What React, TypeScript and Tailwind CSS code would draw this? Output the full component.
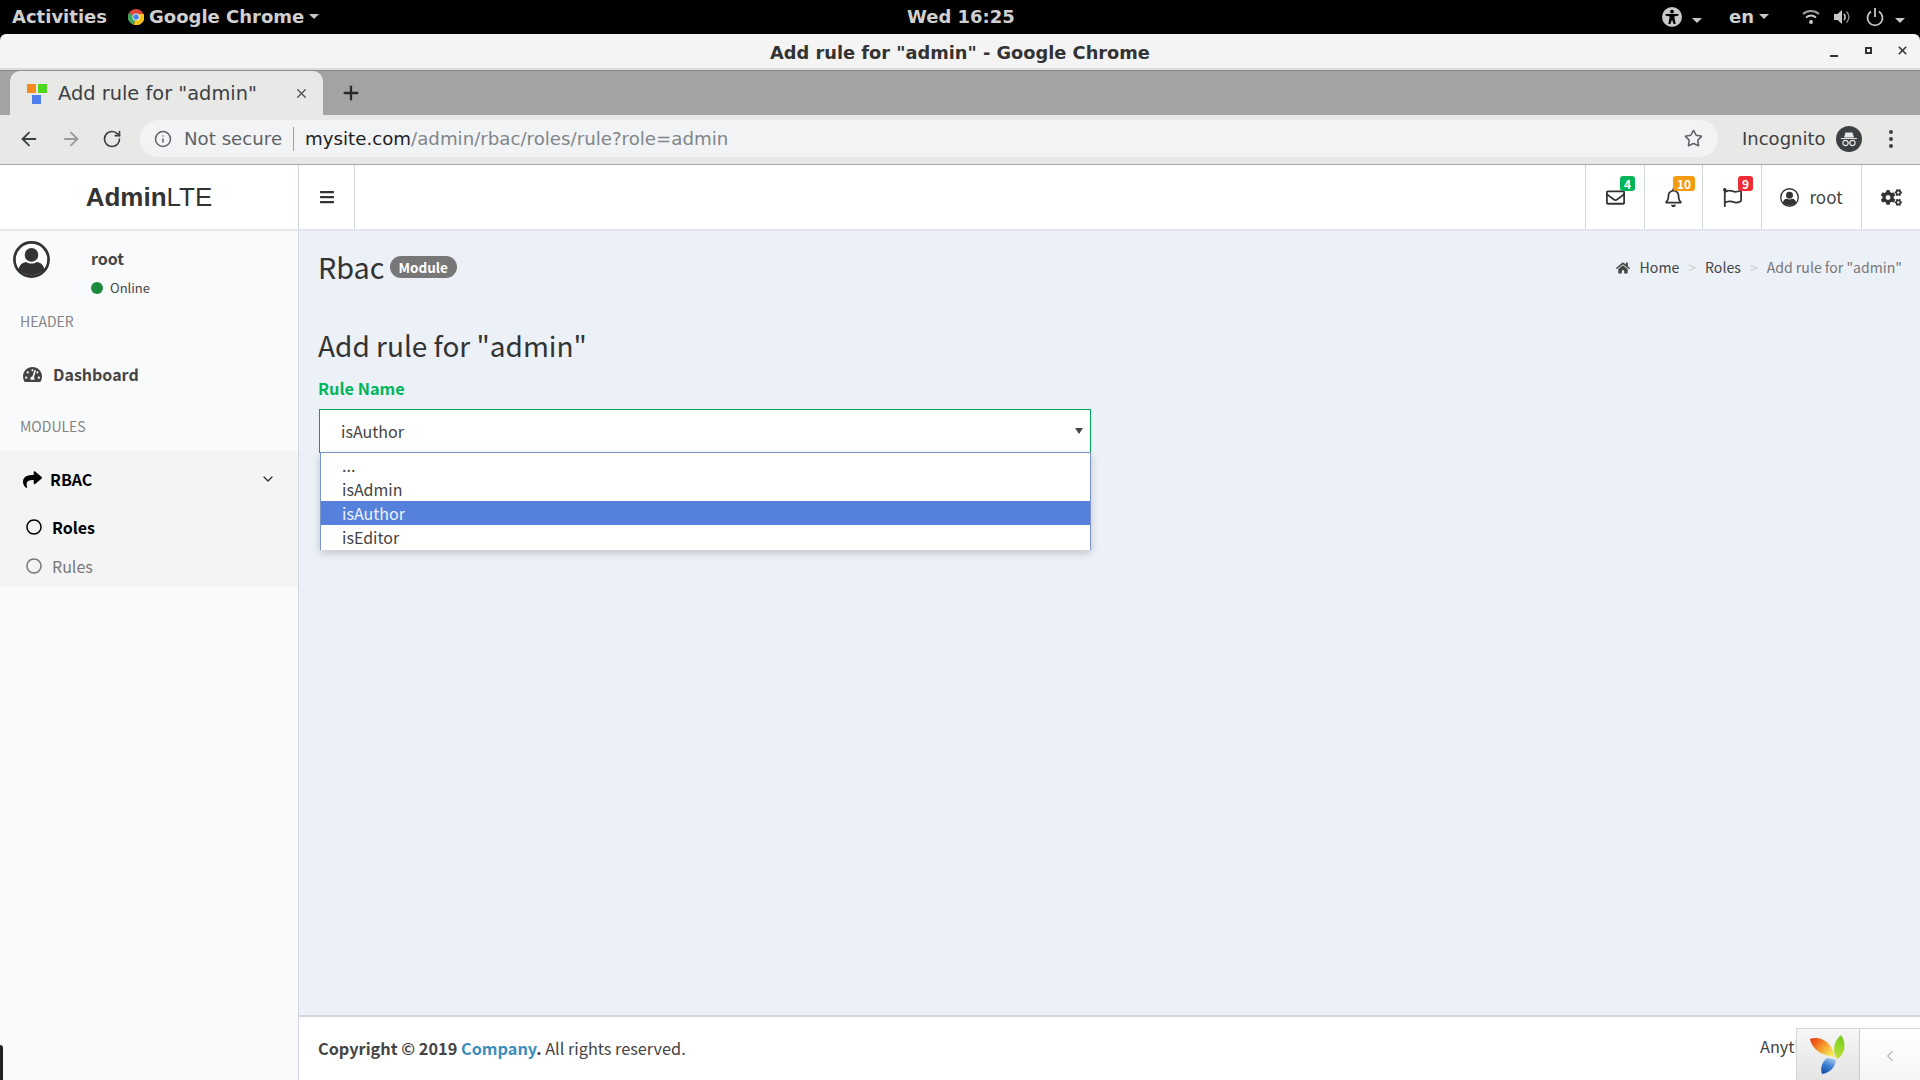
import React from 'react';
import { ArrowLeft, ArrowRight, RotateCw, Info, Star, Plus, X, ChevronDown, ChevronLeft } from 'lucide-react';
import {
  FaBars,
  FaCogs,
  FaHome,
  FaRegBell,
  FaRegCircle,
  FaRegEnvelope,
  FaRegFlag,
  FaShare,
  FaTachometerAlt,
} from 'react-icons/fa';

const PAGE_FONT = "font-['Noto_Sans_CJK_SC','Noto_Sans',sans-serif]";

const Caret = () => (
  <span className="inline-block h-0 w-0 border-x-[5px] border-t-[5px] border-x-transparent border-t-[#c8c8c8]" />
);

const ChromeLogo = () => (
  <svg width="16" height="16" viewBox="0 0 16 16">
    <circle cx="8" cy="8" r="8" fill="#d9463a" />
    <path d="M8 8 L1 4 A8 8 0 0 0 6 15.8 Z" fill="#3aa757" />
    <path d="M8 8 L6 15.8 A8 8 0 0 0 15.8 5 L8 5 Z" fill="#f5c518" />
    <circle cx="8" cy="8" r="3.6" fill="#fff" />
    <circle cx="8" cy="8" r="2.8" fill="#4a80e8" />
  </svg>
);

const AccessIcon = () => (
  <svg width="20" height="20" viewBox="0 0 20 20">
    <circle cx="10" cy="10" r="10" fill="#c8c8c8" />
    <circle cx="10" cy="4.6" r="1.9" fill="#000" />
    <path d="M3.5 7 L16.5 7 L16.5 8.6 L12.3 9.6 L13.6 17 L11.6 17 L10 12.5 L8.4 17 L6.4 17 L7.7 9.6 L3.5 8.6 Z" fill="#000" />
  </svg>
);

const WifiIcon = () => (
  <svg width="18" height="18" viewBox="0 0 18 18" fill="none" stroke="#c8c8c8">
    <path d="M1 6 C5.5 2 12.5 2 17 6" strokeWidth="2" opacity="0.8" />
    <path d="M4 9.5 C7 7 11 7 14 9.5" strokeWidth="2" />
    <circle cx="9" cy="14" r="2" fill="#c8c8c8" stroke="none" />
  </svg>
);

const VolumeIcon = () => (
  <svg width="18" height="18" viewBox="0 0 18 18" fill="none" stroke="#c8c8c8">
    <path d="M1 6 H4.5 L9 2 V16 L4.5 12 H1 Z" fill="#c8c8c8" stroke="none" />
    <path d="M11 6 C12.5 8 12.5 10 11 12" strokeWidth="1.6" />
    <path d="M13.5 3.5 C16.5 7 16.5 11 13.5 14.5" strokeWidth="1.4" opacity="0.7" />
  </svg>
);

const PowerIcon = () => (
  <svg width="18" height="20" viewBox="0 0 18 20" fill="none" stroke="#c8c8c8" strokeWidth="1.8">
    <path d="M9 1 V10" />
    <path d="M5 4.5 A7.5 7.5 0 1 0 13 4.5" />
  </svg>
);

const Favicon = () => (
  <span className="grid h-[20px] w-[20px] grid-cols-2 gap-[2px]">
    <span className="h-[9px] w-[9px] bg-[#f58a1f]" />
    <span className="h-[9px] w-[9px] bg-[#4fd61f]" />
    <span className="col-start-1 ml-[5px] h-[9px] w-[9px] bg-[#4d80ee]" />
  </span>
);

const IncognitoIcon = () => (
  <svg width="26" height="26" viewBox="0 0 26 26">
    <circle cx="13" cy="13" r="13" fill="#3c4043" />
    <path d="M5 12 H21 V13 H5 Z M8 11.5 L9.5 6.5 H16.5 L18 11.5 Z" fill="#e8e8e6" />
    <circle cx="9.5" cy="17" r="2.6" fill="none" stroke="#e8e8e6" strokeWidth="1.1" />
    <circle cx="16.5" cy="17" r="2.6" fill="none" stroke="#e8e8e6" strokeWidth="1.1" />
    <path d="M12 17 H14" stroke="#e8e8e6" strokeWidth="1.1" />
  </svg>
);

// ring, white gap, then head and shoulders clipped to the circle
const UserRing = ({ size }: { size: number }) => (
  <svg width={size} height={size} viewBox="0 0 36 36">
    <circle cx="18" cy="18" r="16.6" fill="#fff" stroke="#333" strokeWidth="2.6" />
    <circle cx="18" cy="13.5" r="6.6" fill="#333" />
    <path d="M5.5 28 C6 23 9.5 21 13 20.5 C16 22.5 20 22.5 23 20.5 C26.5 21 30 23 30.5 28 C24 35 12 35 5.5 28 Z" fill="#333" />
  </svg>
);

const YiiLogo = () => (
  <svg width="38" height="40" viewBox="0 0 38 40">
    <defs>
      <linearGradient id="yiiRed" x1="0" y1="0" x2="1" y2="0.7">
        <stop offset="0" stopColor="#e8300e" />
        <stop offset="0.55" stopColor="#f79a2b" />
        <stop offset="1" stopColor="#f5ea60" />
      </linearGradient>
      <linearGradient id="yiiGreen" x1="0.6" y1="0" x2="0.4" y2="1">
        <stop offset="0" stopColor="#6fcc1d" />
        <stop offset="1" stopColor="#c4e03a" />
      </linearGradient>
      <linearGradient id="yiiBlue" x1="0.7" y1="0" x2="0.3" y2="1">
        <stop offset="0" stopColor="#a8c8e8" />
        <stop offset="0.5" stopColor="#3b7fd0" />
        <stop offset="1" stopColor="#1450a8" />
      </linearGradient>
    </defs>
    <path d="M1 4 C10 1 22 5 26 22 C18 21 4 18 1 4 Z" fill="url(#yiiRed)" />
    <path d="M32 0 C38 8 36 20 28 24 C22 14 26 5 32 0 Z" fill="url(#yiiGreen)" />
    <path d="M18 23 C21 23 25 24 27 25 C26 33 20 38 13 39 C11 33 13 27 18 23 Z" fill="url(#yiiBlue)" />
  </svg>
);

const notifications = [
  { key: 'mail', w: 'w-[59px]', Icon: FaRegEnvelope, badge: '4', color: 'bg-[#00b55a]', badgeLeft: 'left-[34px]' },
  { key: 'bell', w: 'w-[58px]', Icon: FaRegBell, badge: '10', color: 'bg-[#f39c12]', badgeLeft: 'left-[28px]' },
  { key: 'flag', w: 'w-[59px]', Icon: FaRegFlag, badge: '9', color: 'bg-[#ee2c35]', badgeLeft: 'left-[35px]' },
];

function DesktopBar() {
  return (
    <div className="relative flex h-[34px] shrink-0 items-center justify-between bg-black pb-[1px] pl-[12px] pr-[15px] font-['DejaVu_Sans',sans-serif] text-[18px] font-bold text-[#d0d0d0]">
      <div className="flex items-center">
        <span className="w-[116px]">Activities</span>
        <ChromeLogo />
        <span className="ml-[5px] mr-[5px]">Google Chrome</span>
        <Caret />
      </div>
      <span className="absolute left-[907px] top-[3px]">Wed 16:25</span>
      <div className="flex items-center">
        <AccessIcon />
        <span className="ml-[10px] mr-[27px]"><Caret /></span>
        <span className="mr-[5px]">en</span>
        <Caret />
        <span className="ml-[33px]"><WifiIcon /></span>
        <span className="ml-[13px]"><VolumeIcon /></span>
        <span className="ml-[15px]"><PowerIcon /></span>
        <span className="ml-[11px]"><Caret /></span>
      </div>
    </div>
  );
}

function ChromeFrame() {
  return (
    <div className="shrink-0 bg-black font-['DejaVu_Sans',sans-serif]">
      <div className="relative flex h-[36px] items-center justify-center rounded-t-[6px] border-b-2 border-[#dcdcdc] bg-[#f4f4f4] pt-[4px] text-[17.8px] font-bold text-[#333]">
        Add rule for "admin" - Google Chrome
        <span className="absolute left-[1830px] top-[21px] h-[2px] w-[8px] bg-[#333]" />
        <span className="absolute left-[1865px] top-[13px] h-[7px] w-[7px] border-2 border-[#333]" />
        <X className="absolute left-[1896px] top-[10px] h-[13px] w-[13px] text-[#333]" strokeWidth={3} />
      </div>
      <div className="flex h-[45px] items-end border-y border-[#8a8a88] border-b-0 bg-[#a3a3a1] pl-[10px]">
        <div className="flex h-[44px] w-[313px] items-center rounded-t-[10px] bg-[#e8e8e6] pl-[17px] pr-[14px] pt-[1px] text-[19.4px] text-[#3c4043]">
          <Favicon />
          <span className="ml-[11px] flex-1">Add rule for "admin"</span>
          <X className="h-[15px] w-[15px] text-[#4a4a4a]" strokeWidth={2} />
        </div>
        <Plus className="mb-[11px] ml-[17px] h-[22px] w-[22px] text-[#2a2a2a]" strokeWidth={2.5} />
      </div>
      <div className="flex h-[50px] items-center border-y border-[#e8e8e6] border-b-[#a8a8a8] bg-[#e8e8e6] pb-[3px] pl-[18px] pr-[18px]">
        <ArrowLeft className="h-[22px] w-[22px] text-[#3c4043]" strokeWidth={2} />
        <ArrowRight className="ml-[20px] h-[22px] w-[22px] text-[#9a9a9a]" strokeWidth={2} />
        <RotateCw className="ml-[20px] h-[20px] w-[20px] text-[#3c4043]" strokeWidth={2} />
        <div className="ml-[18px] flex h-[37px] w-[1578px] items-center rounded-full bg-[#f1f3f4] pl-[14px] pr-[14px] text-[18.2px]">
          <Info className="h-[18px] w-[18px] text-[#5f6368]" strokeWidth={2} />
          <span className="ml-[12px] text-[#5f6368]">Not secure</span>
          <span className="ml-[11px] mr-[11px] h-[24px] w-px bg-[#9aa0a6]" />
          <span className="text-[#202124]">mysite.com</span>
          <span className="flex-1 text-[#80868b]">/admin/rbac/roles/rule?role=admin</span>
          <Star className="mr-[1px] h-[19px] w-[19px] text-[#5f6368]" strokeWidth={2} />
        </div>
        <span className="ml-[24px] text-[18px] text-[#3c4043]">Incognito</span>
        <span className="ml-[10px]"><IncognitoIcon /></span>
        <span className="ml-[27px] flex flex-col gap-[3px]">
          <span className="h-[4px] w-[4px] rounded-full bg-[#3c4043]" />
          <span className="h-[4px] w-[4px] rounded-full bg-[#3c4043]" />
          <span className="h-[4px] w-[4px] rounded-full bg-[#3c4043]" />
        </span>
      </div>
    </div>
  );
}

function TopNav() {
  return (
    <div className="flex h-[66px] shrink-0 border-b-2 border-[#e4e6ee] bg-white text-[#333]">
      <div className="flex w-[299px] items-center justify-center border-r border-[#d2d6de] text-[26px] text-[#333] font-['Liberation_Sans',sans-serif]">
        <b className="font-bold">Admin</b>LTE
      </div>
      <div className="flex w-[56px] items-center justify-center border-r border-[#d2d6de]">
        <FaBars className="h-[16px] w-[16px]" />
      </div>
      <div className="flex-1" />
      {notifications.map(({ key, w, Icon, badge, color, badgeLeft }) => (
        <div key={key} className={`relative flex ${w} items-center justify-center border-l border-[#d2d6de]`}>
          <Icon className="h-[19px] w-[19px]" />
          <span className={`absolute ${badgeLeft} top-[11px] rounded-[3px] px-[4px] text-[12px] leading-[15px] font-bold text-white ${color}`}>
            {badge}
          </span>
        </div>
      ))}
      <div className="flex w-[100px] items-center justify-center border-l border-[#d2d6de] text-[17px] text-[#444]">
        <span className="mr-[10px] flex"><UserRing size={19} /></span>
        root
      </div>
      <div className="flex w-[59px] items-center justify-center border-l border-[#d2d6de]">
        <FaCogs className="h-[21px] w-[21px]" />
      </div>
    </div>
  );
}

function Sidebar() {
  return (
    <aside className="relative flex w-[299px] shrink-0 flex-col border-r border-[#d2d6de] bg-[#f9fafc] text-[#444]">
      <div className="flex h-[80px] pl-[13px] pt-[10px]">
        <span className="flex"><UserRing size={37} /></span>
        <div className="ml-[41px]">
          <div className="mt-[5px] text-[16px] leading-[24px] font-semibold">root</div>
          <div className="mt-[8px] flex items-center text-[13px] leading-[20px]">
            <span className="mr-[7px] h-[12px] w-[12px] rounded-full bg-[#1b8a3c]" />
            Online
          </div>
        </div>
      </div>
      <div className="pl-[20px] text-[14px] leading-[20px] text-[#848484]">HEADER</div>
      <div className="mt-[23px] flex h-[40px] items-center pl-[23px] text-[16px] font-semibold">
        <FaTachometerAlt className="h-[19px] w-[19px]" />
        <span className="ml-[11px]">Dashboard</span>
      </div>
      <div className="mt-[22px] pl-[20px] text-[14px] leading-[20px] text-[#848484]">MODULES</div>
      <div className="mt-[15px] bg-[#f4f4f5] pb-[1px]">
        <div className="flex h-[56px] items-center pl-[23px] pr-[22px] text-[16px] font-semibold text-black">
          <FaShare className="h-[19px] w-[19px]" />
          <span className="ml-[8px] flex-1">RBAC</span>
          <ChevronDown className="h-[16px] w-[16px] text-[#333]" strokeWidth={2} />
        </div>
        <div className="flex h-[39px] items-center pl-[26px] text-[16px] font-semibold text-black">
          <FaRegCircle className="h-[16px] w-[16px]" />
          <span className="ml-[10px]">Roles</span>
        </div>
        <div className="flex h-[40px] items-center pl-[26px] text-[16px] text-[#777]">
          <FaRegCircle className="h-[16px] w-[16px]" />
          <span className="ml-[10px]">Rules</span>
        </div>
      </div>
      <span className="absolute bottom-0 left-0 h-[35px] w-[3px] rounded-tr-[3px] bg-[#222]" />
    </aside>
  );
}

function Content() {
  return (
    <main className="flex min-w-0 flex-1 flex-col bg-[#ecf0f7] text-[#333]">
      <div className="flex flex-1 flex-col pl-[19px] pr-[18px]">
        <div className="flex h-[74px] items-center justify-between">
          <div className="mb-[2px] flex items-center">
            <span className="text-[28.8px] leading-[36px] text-[#333]">Rbac</span>
            <span className="ml-[5px] rounded-full bg-[#777] px-[9px] text-[13.5px] leading-[22px] font-bold text-white">Module</span>
          </div>
          <div className="flex items-center text-[14.1px] text-[#444]">
            <FaHome className="mr-[10px] h-[14px] w-[14px]" />
            <span>Home</span>
            <span className="mx-[9px] text-[#ccc]">&gt;</span>
            <span>Roles</span>
            <span className="mx-[9px] text-[#ccc]">&gt;</span>
            <span className="text-[#777]">Add rule for "admin"</span>
          </div>
        </div>
        <h3 className="mt-[18px] text-[28px] leading-[44px] font-normal text-[#333]">Add rule for "admin"</h3>
        <label className="mt-[9px] block text-[16.3px] leading-[24px] font-bold text-[#00b55a]">Rule Name</label>
        <div className="relative ml-px mt-[9px] w-[772px]">
          <div className="flex h-[44px] items-center justify-between border border-[#00a65a] bg-white pb-[1px] pl-[21px] pr-[7px] text-[16px] text-[#444]">
            isAuthor
            <span className="h-0 w-0 border-x-[4px] border-t-[6px] border-x-transparent border-t-[#444]" />
          </div>
          <div className="absolute left-px right-0 top-[43px] flex flex-col border border-[#7a94c8] border-b-0 bg-white pb-[1px] text-[16px] leading-[24px] text-[#444] shadow-[0_3px_8px_rgba(0,0,0,0.18)]">
            <div className="pl-[21px]">...</div>
            <div className="pl-[21px]">isAdmin</div>
            <div className="bg-[#5581dd] pl-[21px] text-[#eef2fb]">isAuthor</div>
            <div className="pl-[21px]">isEditor</div>
          </div>
        </div>
      </div>
      <footer className="relative flex h-[65px] shrink-0 items-center justify-between border-t-2 border-[#d2d6de] bg-white pl-[19px] text-[16.3px] text-[#444]">
        <span>
          <b className="font-bold">Copyright © 2019 <span className="text-[#3c8dbc]">Company</span>.</b> All rights reserved.
        </span>
        <span className="absolute left-[1461px] top-[17px]">Anything you want</span>
        <div className="absolute bottom-0 right-0 flex h-[52px] w-[124px] border-l border-t border-[#d8d8d8] bg-gradient-to-b from-white to-[#f6f6f6]">
          <div className="flex w-[63px] items-center justify-center border-r border-[#ccc] bg-gradient-to-b from-[#f6f6f6] to-[#e4e4e4]">
            <YiiLogo />
          </div>
          <div className="flex flex-1 items-center justify-center pt-[2px]">
            <ChevronLeft className="h-[18px] w-[18px] text-[#b8b8b8]" strokeWidth={1.5} />
          </div>
        </div>
      </footer>
    </main>
  );
}

export default function App() {
  return (
    <div className={`flex h-[1080px] w-[1920px] flex-col overflow-hidden ${PAGE_FONT}`}>
      <DesktopBar />
      <ChromeFrame />
      <TopNav />
      <div className="flex min-h-0 flex-1">
        <Sidebar />
        <Content />
      </div>
    </div>
  );
}
